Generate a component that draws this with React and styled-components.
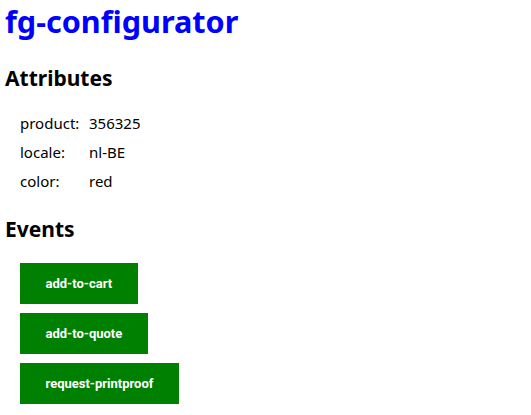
import React from 'react'
import styled, { createGlobalStyle } from 'styled-components'

const GlobalStyle = createGlobalStyle`
body {
  margin: 0;
  padding: 0 5px;
  font-family: 'Noto Sans', 'Open Sans', sans-serif;
  color: #000;
  background: #fff;
}
`

const Title = styled.h1`
font-size: 30.6px;
font-weight: 700;
color: #0000ff;
margin: 0;
padding-top: 2px;
line-height: 38px;
`

const SectionTitle = styled.h2`
font-size: 21px;
font-weight: 700;
margin: ${p => p.$top || 24}px 0 0;
line-height: 28px;
`

const AttrGrid = styled.div`
display: grid;
grid-template-columns: 69px auto;
grid-auto-rows: 29px;
align-items: center;
padding: 16px 0 0 15px;
font-size: 15px;
`

const Label = styled.span``
const Value = styled.span``

const EventList = styled.div`
display: flex;
flex-direction: column;
align-items: flex-start;
gap: 9px;
padding: 20px 0 0 15px;
`

const EventButton = styled.button`
background: #008000;
color: #fff;
border: none;
height: 41px;
padding: 0 25.5px;
font-family: 'Roboto', 'Liberation Sans', sans-serif;
font-weight: 700;
font-size: 13px;
cursor: pointer;
`

const attributes = [
  ['product:', '356325'],
  ['locale:', 'nl-BE'],
  ['color:', 'red'],
]

const events = ['add-to-cart', 'add-to-quote', 'request-printproof']

export default function App() {
  return (
    <>
      <GlobalStyle />
      <Title>fg-configurator</Title>
      <SectionTitle>Attributes</SectionTitle>
      <AttrGrid>
        {attributes.map(([k, v]) => (
          <React.Fragment key={k}>
            <Label>{k}</Label>
            <Value>{v}</Value>
          </React.Fragment>
        ))}
      </AttrGrid>
      <SectionTitle $top={20}>Events</SectionTitle>
      <EventList>
        {events.map(e => <EventButton key={e}>{e}</EventButton>)}
      </EventList>
    </>
  )
}
